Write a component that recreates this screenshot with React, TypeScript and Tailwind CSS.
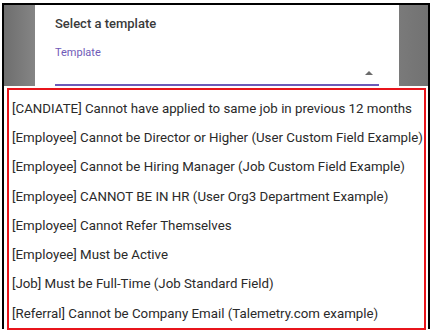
import React from "react";

const items = [
  "[CANDIATE] Cannot have applied to same job in previous 12 months",
  "[Employee] Cannot be Director or Higher (User Custom Field Example)",
  "[Employee] Cannot be Hiring Manager (Job Custom Field Example)",
  "[Employee] CANNOT BE IN HR (User Org3 Department Example)",
  "[Employee] Cannot Refer Themselves",
  "[Employee] Must be Active",
  "[Job] Must be Full-Time (Job Standard Field)",
  "[Referral] Cannot be Company Email (Talemetry.com example)",
];

export default function App() {
  return (
    <div
      className="w-[432px] h-[332px] bg-white pt-[3px] pl-[2px]"
      style={{ fontFamily: "Roboto, 'Liberation Sans', sans-serif" }}
    >
      <div className="w-[428px] h-[326px] border-2 border-black flex flex-col">
        <div className="h-[81px] flex shrink-0">
          <div className="w-[31px] bg-gradient-to-r from-[#6e6e6e] to-[#858585]" />
          <div className="w-[364px] bg-white relative pl-[20px] pr-[20px]">
            <div className="pt-[10px] text-[13px] leading-[18px] font-medium text-[#3a3a3a]">
              Select a template
            </div>
            <div className="mt-[13px] text-[11px] leading-[14px] text-[#6f5bb8]">Template</div>
            <div className="absolute left-[20px] right-[20px] bottom-0 h-[2px] bg-[#6c5ab8]" />
            <svg
              className="absolute right-[26px] top-[66px]"
              width="8"
              height="4"
              viewBox="0 0 8 4"
            >
              <path d="M0 4 L4 0 L8 4 Z" fill="#6b6b6b" />
            </svg>
          </div>
          <div className="flex-1 bg-gradient-to-r from-[#7a7a7a] to-[#727272]" />
        </div>
        <div className="flex-1 bg-white pt-[2px] pl-[3px] pr-[2px] pb-[3px] flex">
          <div className="flex-1 border-2 border-[#e8141b] overflow-hidden pt-[4px] pl-[3px]">
            {items.map((t) => (
              <div
                key={t}
                className="h-[29.3px] flex items-center text-[13.3px] text-[#2a2a2a] whitespace-nowrap"
              >
                {t}
              </div>
            ))}
          </div>
        </div>
      </div>
    </div>
  );
}
